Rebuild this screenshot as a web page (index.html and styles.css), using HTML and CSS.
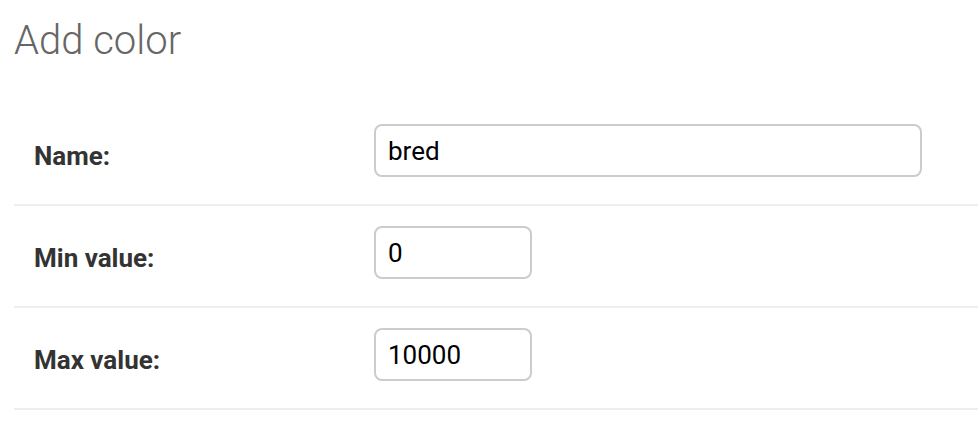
FILE: index.html
```html
<!DOCTYPE html>
<html lang="en">
<head>
<meta charset="utf-8">
<title>Add color</title>
<link rel="stylesheet" href="styles.css">
</head>
<body>
<div class="content">
  <h1 class="title">Add color</h1>
  <form class="form">
    <div class="form-row">
      <label class="label" for="id_name">Name:</label>
      <input class="input input-wide" id="id_name" type="text" value="bred">
    </div>
    <div class="form-row">
      <label class="label" for="id_min">Min value:</label>
      <input class="input input-short" id="id_min" type="text" value="0">
    </div>
    <div class="form-row">
      <label class="label" for="id_max">Max value:</label>
      <input class="input input-short" id="id_max" type="text" value="10000">
    </div>
  </form>
</div>
</body>
</html>
```

FILE: styles.css
```css
html, body {
  margin: 0;
  padding: 0;
  background: #fff;
}

body {
  font-family: Roboto, "Liberation Sans", sans-serif;
  color: #333;
}

.content {
  padding-left: 14px;
}

.title {
  margin: 17px 0 39px;
  font-size: 40px;
  line-height: 48px;
  font-weight: 300;
  color: #666;
}

.form {
  display: flex;
  flex-direction: column;
}

.form-row {
  display: flex;
  align-items: center;
  padding: 20px 0 27px 20px;
  border-bottom: 2px solid #eee;
}

.label {
  width: 340px;
  flex: none;
  padding-top: 10px;
  font-size: 26px;
  font-weight: 700;
  color: #333;
}

.input {
  box-sizing: border-box;
  height: 53px;
  padding: 0 12px;
  border: 2px solid #ccc;
  border-radius: 8px;
  font-family: Roboto, "Liberation Sans", sans-serif;
  font-size: 26px;
  color: #000;
  background: #fff;
  outline: none;
}

.input-wide {
  width: 548px;
}

.input-short {
  width: 158px;
}
```
